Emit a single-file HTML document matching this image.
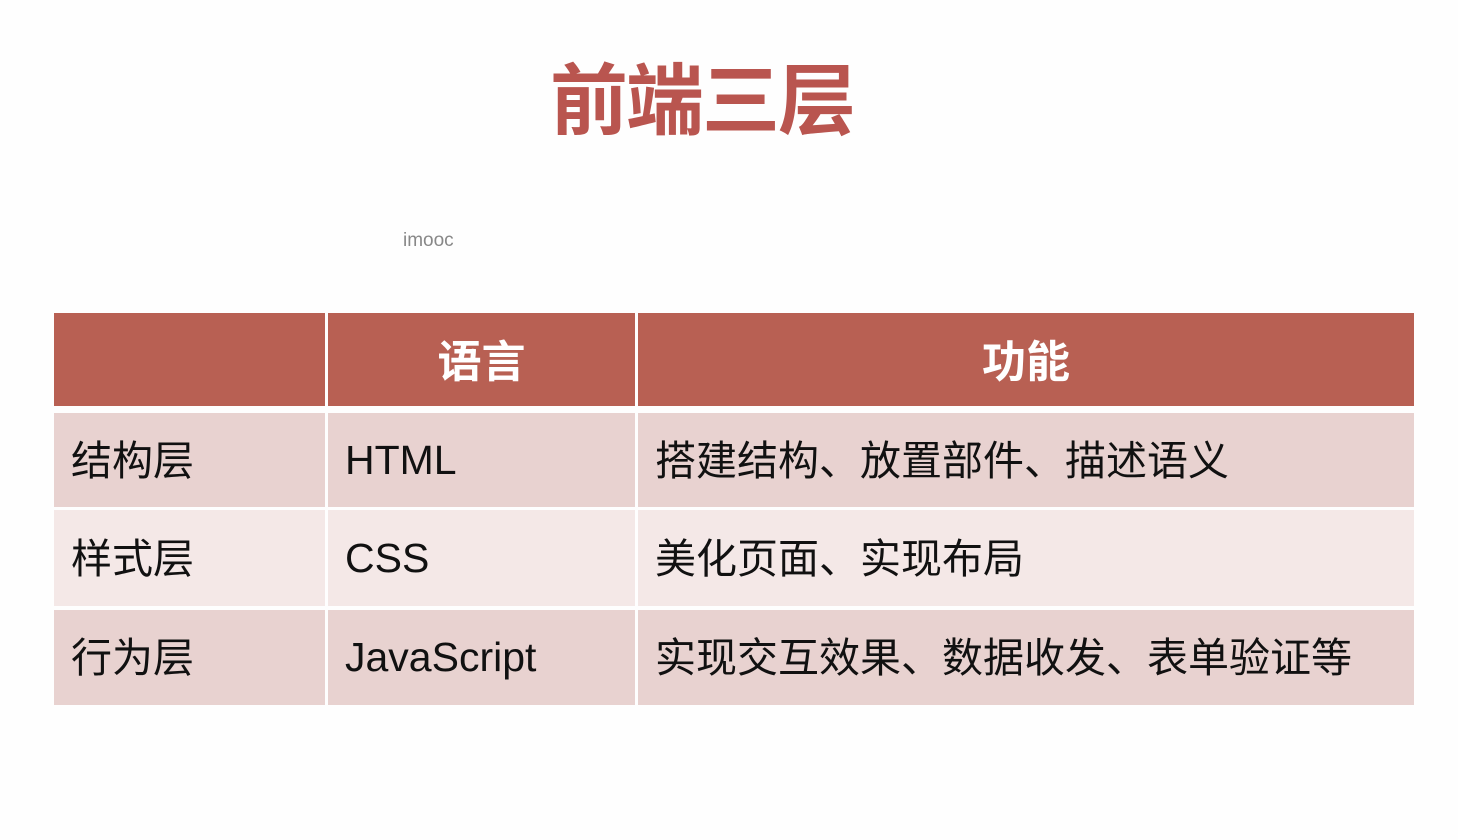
<!DOCTYPE html>
<html><head><meta charset="utf-8"><style>
html,body{margin:0;padding:0;background:#fefefe;width:1458px;height:840px;overflow:hidden;position:relative;font-family:"Liberation Sans","Noto Sans CJK SC",sans-serif;}
.t{position:absolute;left:550px;top:47px;font-size:78px;font-weight:bold;color:#b9554f;letter-spacing:-2px;line-height:96px;font-family:"Noto Sans CJK SC",sans-serif;}
.w{position:absolute;left:403px;top:230px;font-size:19px;color:#888;}
.c{position:absolute;box-sizing:border-box;display:flex;align-items:center;font-size:41px;color:#111;font-family:"Noto Sans CJK SC",sans-serif;line-height:1;}
.h{background:#b86053;color:#fff;font-weight:bold;justify-content:center;font-size:44px;padding-bottom:4px;}
.a{background:#e8d2d0;}
.b{background:#f4e8e7;}
.l{padding-left:17px;padding-bottom:6px;}
.m{padding-left:17px;font-family:"Liberation Sans","Noto Sans CJK SC",sans-serif;}
</style></head><body>
<div class="t">前端三层</div>
<div class="w">imooc</div>

<div class="c h" style="left:54px;top:313px;width:271px;height:93px"></div>
<div class="c h" style="left:328px;top:313px;width:307px;height:93px">语言</div>
<div class="c h" style="left:638px;top:313px;width:776px;height:93px">功能</div>

<div class="c a l" style="left:54px;top:413px;width:271px;height:94px">结构层</div>
<div class="c a m" style="left:328px;top:413px;width:307px;height:94px">HTML</div>
<div class="c a l" style="left:638px;top:413px;width:776px;height:94px">搭建结构、放置部件、描述语义</div>

<div class="c b l" style="left:54px;top:510px;width:271px;height:96px">样式层</div>
<div class="c b m" style="left:328px;top:510px;width:307px;height:96px">CSS</div>
<div class="c b l" style="left:638px;top:510px;width:776px;height:96px">美化页面、实现布局</div>

<div class="c a l" style="left:54px;top:610px;width:271px;height:95px">行为层</div>
<div class="c a m" style="left:328px;top:610px;width:307px;height:95px">JavaScript</div>
<div class="c a l" style="left:638px;top:610px;width:776px;height:95px">实现交互效果、数据收发、表单验证等</div>
</body></html>
